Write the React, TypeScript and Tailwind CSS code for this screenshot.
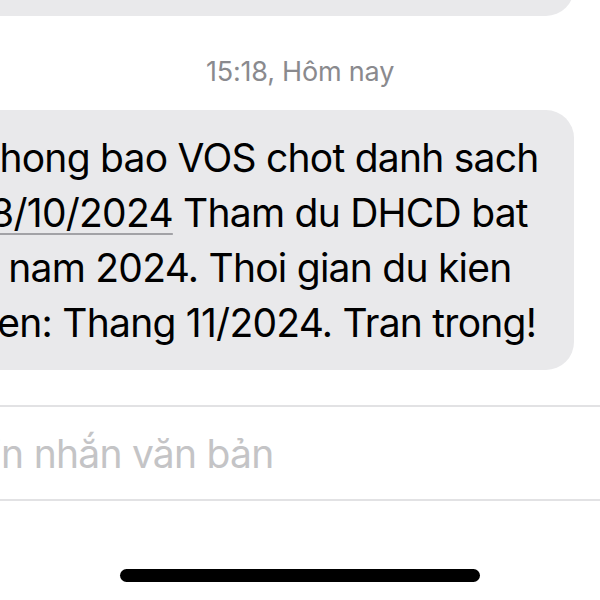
import React from "react";

export default function App() {
  return (
    <div className="w-[600px] h-[600px] overflow-hidden bg-white flex flex-col font-['Inter',sans-serif] antialiased">
      {/* previous bubble, mostly scrolled off the top */}
      <div className="ml-[-45px] mt-[-40px] w-[619px] h-[56px] shrink-0 rounded-[28px] bg-[#e9e9eb]" />

      {/* timestamp */}
      <div className="mt-[40px] h-[32px] leading-[32px] text-center text-[27px] text-[#8a8a8e] tracking-[-0.2px]">
        15:18, Hôm nay
      </div>

      {/* incoming message bubble */}
      <div className="ml-[-45px] mt-[22px] w-[619px] shrink-0 rounded-[28px] bg-[#e9e9eb] pl-[20px] py-5 text-[39px] leading-[55px] tracking-[-0.75px] text-black whitespace-nowrap">
        <div>Thong bao VOS chot danh sach</div>
        <div>
          <span className="underline decoration-[#a2a2a6] decoration-[length:1.5px] underline-offset-[6px]">
            18/10/2024
          </span>{" "}
          Tham du DHCD bat
        </div>
        <div>2 nam 2024. Thoi gian du kien</div>
        <div>hen: Thang 11/2024. Tran trong!</div>
      </div>

      {/* composer */}
      <div className="mt-[35px] h-[2px] shrink-0 bg-[#e2e2e4]" />
      <div className="ml-[-32px] pt-[19px] pb-[18px] text-[39px] leading-[55px] tracking-[-0.75px] text-[#c4c4c6] whitespace-nowrap">
        Tin nhắn văn bản
      </div>
      <div className="h-[2px] shrink-0 bg-[#e2e2e4]" />

      {/* home indicator */}
      <div className="mt-[68px] mx-auto h-[13px] w-[360px] shrink-0 rounded-full bg-black" />
    </div>
  );
}
